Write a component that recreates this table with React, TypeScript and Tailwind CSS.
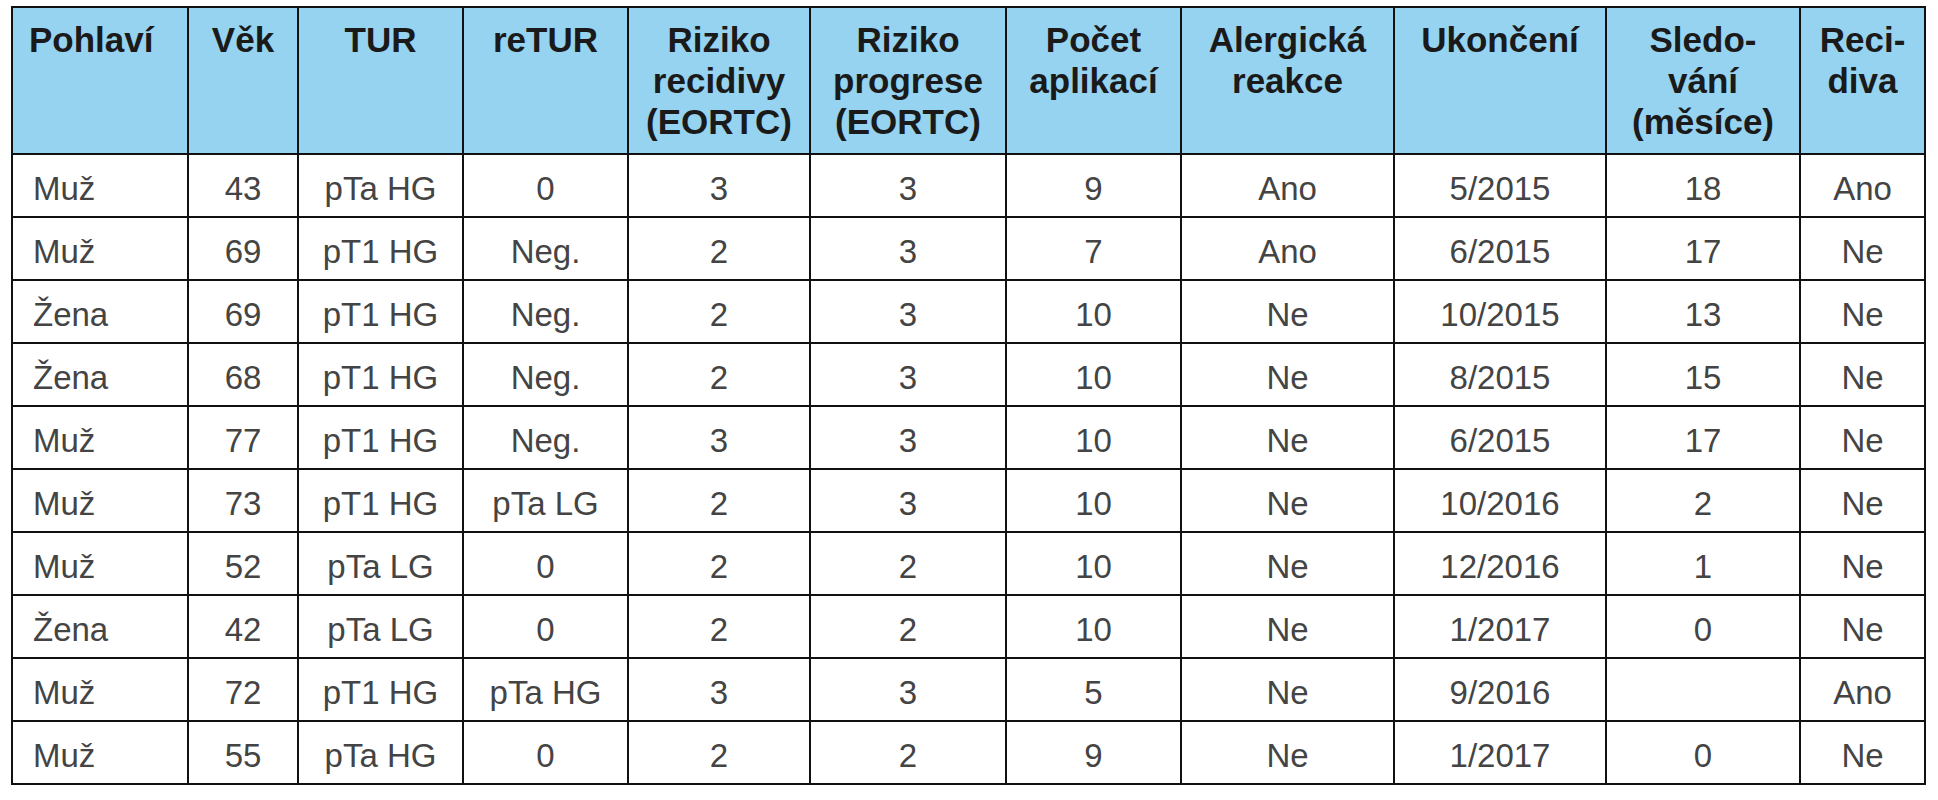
import React from "react"

const columns = [
    { w: 176, lines: ["Pohlaví"], left: true },
    { w: 110, lines: ["Věk"] },
    { w: 165, lines: ["TUR"] },
    { w: 165, lines: ["reTUR"] },
    { w: 182, lines: ["Riziko", "recidivy", "(EORTC)"] },
    { w: 196, lines: ["Riziko", "progrese", "(EORTC)"] },
    { w: 175, lines: ["Počet", "aplikací"] },
    { w: 213, lines: ["Alergická", "reakce"] },
    { w: 212, lines: ["Ukončení"] },
    { w: 194, lines: ["Sledo-", "vání", "(měsíce)"] },
    { w: 125, lines: ["Reci-", "diva"] },
]

const rows = [
    ["Muž", "43", "pTa HG", "0", "3", "3", "9", "Ano", "5/2015", "18", "Ano"],
    ["Muž", "69", "pT1 HG", "Neg.", "2", "3", "7", "Ano", "6/2015", "17", "Ne"],
    ["Žena", "69", "pT1 HG", "Neg.", "2", "3", "10", "Ne", "10/2015", "13", "Ne"],
    ["Žena", "68", "pT1 HG", "Neg.", "2", "3", "10", "Ne", "8/2015", "15", "Ne"],
    ["Muž", "77", "pT1 HG", "Neg.", "3", "3", "10", "Ne", "6/2015", "17", "Ne"],
    ["Muž", "73", "pT1 HG", "pTa LG", "2", "3", "10", "Ne", "10/2016", "2", "Ne"],
    ["Muž", "52", "pTa LG", "0", "2", "2", "10", "Ne", "12/2016", "1", "Ne"],
    ["Žena", "42", "pTa LG", "0", "2", "2", "10", "Ne", "1/2017", "0", "Ne"],
    ["Muž", "72", "pT1 HG", "pTa HG", "3", "3", "5", "Ne", "9/2016", "", "Ano"],
    ["Muž", "55", "pTa HG", "0", "2", "2", "9", "Ne", "1/2017", "0", "Ne"],
]

const App = () => {
    return (
        <div className="min-h-screen bg-white pt-[6px] pl-[11px] font-['Liberation_Sans',Arial,sans-serif]">
            <table className="table-fixed border-collapse w-[1914px] border-2 border-[#111]">
                <colgroup>
                    {columns.map((c, i) => (
                        <col key={i} style={{ width: c.w }} />
                    ))}
                </colgroup>
                <thead className="bg-[#95d3f0]">
                    <tr>
                        {columns.map((c, i) => (
                            <th
                                key={i}
                                className={`h-[147px] border-2 border-[#111] align-top pt-[11px] text-[35px] leading-[41px] font-bold text-[#1a1a1a] ${c.left ? "text-left pl-[16px]" : "text-center"}`}
                            >
                                {c.lines.map((l, j) => (
                                    <div key={j}>{l}</div>
                                ))}
                            </th>
                        ))}
                    </tr>
                </thead>
                <tbody>
                    {rows.map((r, i) => (
                        <tr key={i} className="bg-white">
                            {r.map((v, j) => (
                                <td
                                    key={j}
                                    className={`h-[63px] border-2 border-[#111] align-middle pt-[5px] text-[33px] leading-none text-[#444] ${j === 0 ? "text-left pl-[20px]" : "text-center"}`}
                                >
                                    {v}
                                </td>
                            ))}
                        </tr>
                    ))}
                </tbody>
            </table>
        </div>
    )
}

export default App
